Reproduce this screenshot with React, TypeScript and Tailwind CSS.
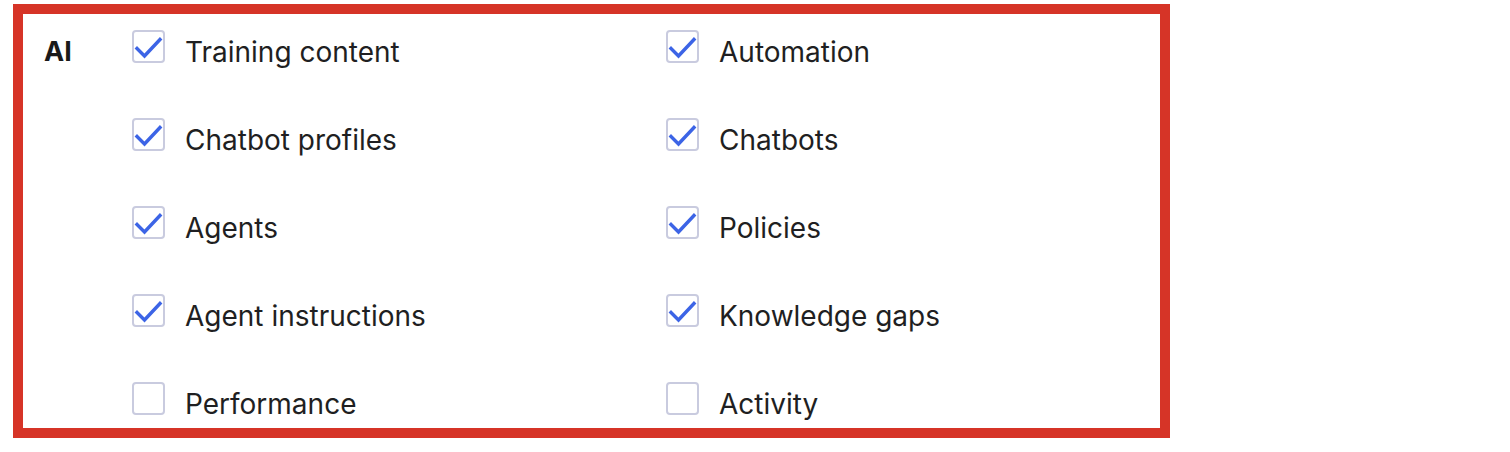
import React from 'react';

type Perm = { label: string; checked: boolean };

const LEFT: Perm[] = [
  { label: 'Training content', checked: true },
  { label: 'Chatbot profiles', checked: true },
  { label: 'Agents', checked: true },
  { label: 'Agent instructions', checked: true },
  { label: 'Performance', checked: false },
];

const RIGHT: Perm[] = [
  { label: 'Automation', checked: true },
  { label: 'Chatbots', checked: true },
  { label: 'Policies', checked: true },
  { label: 'Knowledge gaps', checked: true },
  { label: 'Activity', checked: false },
];

function Checkbox({ checked }: { checked: boolean }) {
  return (
    <div className="w-[33px] h-[33px] shrink-0 rounded-[4px] border-2 border-[#c9cbdf] bg-white flex items-center justify-center">
      {checked && (
        <svg width="33" height="33" viewBox="0 0 33 33" fill="none" className="shrink-0">
          <path d="M5 18.5 L12.5 26 L28 9.5" stroke="#3c64e6" strokeWidth="3.4" strokeLinecap="square" />
        </svg>
      )}
    </div>
  );
}

function Item({ perm }: { perm: Perm }) {
  return (
    <label className="flex items-center gap-[20px] h-[33px] cursor-pointer">
      <Checkbox checked={perm.checked} />
      <span className="text-[28px] leading-none text-[#1f1f22] translate-y-[5px]">{perm.label}</span>
    </label>
  );
}

export default function App() {
  const rows = LEFT.map((l, i) => [l, RIGHT[i]] as const);
  return (
    <div className="bg-white w-[1510px] h-[452px] pt-[4px] pl-[13px]" style={{ fontFamily: 'Inter, "Noto Sans", sans-serif' }}>
      <div className="w-[1157px] h-[434px] border-[10px] border-[#d63427] flex pl-[21px] pt-[16px]">
        <div className="w-[88px] shrink-0 h-[33px] flex items-center">
          <span className="text-[27px] font-bold leading-none text-[#1a1a1a] translate-y-[5px]">AI</span>
        </div>
        <div className="flex flex-col gap-[55px]">
          {rows.map(([l, r]) => (
            <div key={l.label} className="grid grid-cols-[534px_400px]">
              <Item perm={l} />
              <Item perm={r} />
            </div>
          ))}
        </div>
      </div>
    </div>
  );
}
